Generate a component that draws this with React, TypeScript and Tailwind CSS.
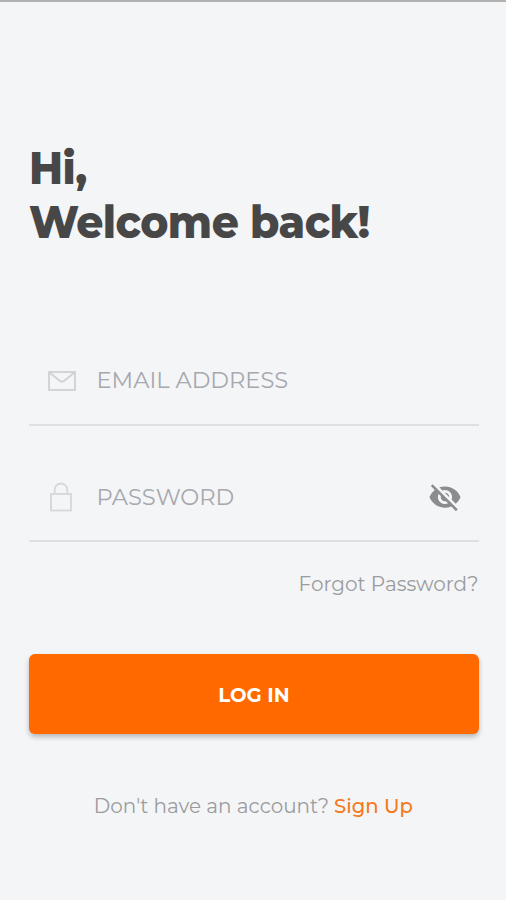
import { useState } from 'react';
import { MdVisibilityOff } from 'react-icons/md';

interface FieldProps {
  id: string;
  type: string;
  placeholder: string;
  icon: React.ReactNode;
  inputClass?: string;
  action?: React.ReactNode;
}

function MailIcon() {
  return (
    <svg viewBox="0 0 28 20" className="w-7 h-5 translate-y-px" fill="none" stroke="#d0d1d4" strokeWidth="1.8">
      <rect x="1" y="1" width="26" height="18" />
      <path d="M1.5 1.5 L12 10 Q14 11.3 16 10 L26.5 1.5" />
    </svg>
  );
}

function LockIcon() {
  return (
    <svg viewBox="0 0 22 30" className="w-[22px] h-[30px] -translate-x-px translate-y-px" fill="none" stroke="#d6d7da" strokeWidth="1.8">
      <rect x="1" y="12" width="20" height="16.5" />
      <path d="M4.7 12 V7.8 A6.3 6.3 0 0 1 17.3 7.8 V12" />
    </svg>
  );
}

function Field({ id, type, placeholder, icon, inputClass = '', action }: FieldProps) {
  return (
    <div className="flex items-center h-[90px] border-b-2 border-[#dfe0e2]">
      <label htmlFor={id} className="flex items-center justify-center w-[66px] pr-px shrink-0">
        {icon}
      </label>
      <input
        id={id}
        name={id}
        type={type}
        placeholder={placeholder}
        className={`flex-1 min-w-0 ml-[1.5px] bg-transparent text-[22.6px] leading-7 outline-none text-[#454545] placeholder:text-[#a6a8ae] ${inputClass}`}
      />
      {action}
    </div>
  );
}

export default function App() {
  const [showPassword, setShowPassword] = useState(false);

  return (
    <main className="flex flex-col h-[900px] w-full pl-[29px] pr-[27px] bg-[#f4f5f7] border-t-2 border-[#b2b2b3] font-['Montserrat','Inter',sans-serif] text-[#9b9c9e]">
      <h1 className="-ml-[0.5px] mt-[139px] text-[45px] leading-[54px] font-extrabold tracking-[-0.6px] text-[#474747] whitespace-nowrap origin-left scale-x-[0.94]">
        Hi,
        <br />
        Welcome back!
      </h1>

      <form className="mt-[87px]" onSubmit={(e) => e.preventDefault()}>
        <Field id="email" type="email" placeholder="EMAIL ADDRESS" icon={<MailIcon />} />
        <div className="mt-[26px]">
          <Field
            id="password"
            type={showPassword ? 'text' : 'password'}
            placeholder="PASSWORD"
            icon={<LockIcon />}
            inputClass="pt-px"
            action={
              <button
                type="button"
                aria-label="Toggle password visibility"
                onClick={() => setShowPassword(!showPassword)}
                className="mr-[17px] pt-px text-[#8b8c8e]"
              >
                <MdVisibilityOff className="w-[34px] h-[34px]" />
              </button>
            }
          />
        </div>

        <div className="flex justify-end mt-7">
          <a href="#" className="pr-[0.5px] text-xl leading-7 whitespace-nowrap">Forgot Password?</a>
        </div>

        <button
          type="submit"
          className="w-full h-20 mt-14 pt-[3px] rounded-md bg-[#ff6900] text-[19.7px] font-bold text-white shadow-[0_3px_5px_rgba(0,0,0,0.25)]"
        >
          LOG IN
        </button>
      </form>

      <p className="flex justify-center gap-[5px] mt-[58px] pr-[1.5px] text-[19.95px] leading-7 whitespace-nowrap">
        <span>Don't have an account?</span>
        <a href="#" className="text-[19.6px] font-medium text-[#f47a20]">Sign Up</a>
      </p>
    </main>
  );
}
